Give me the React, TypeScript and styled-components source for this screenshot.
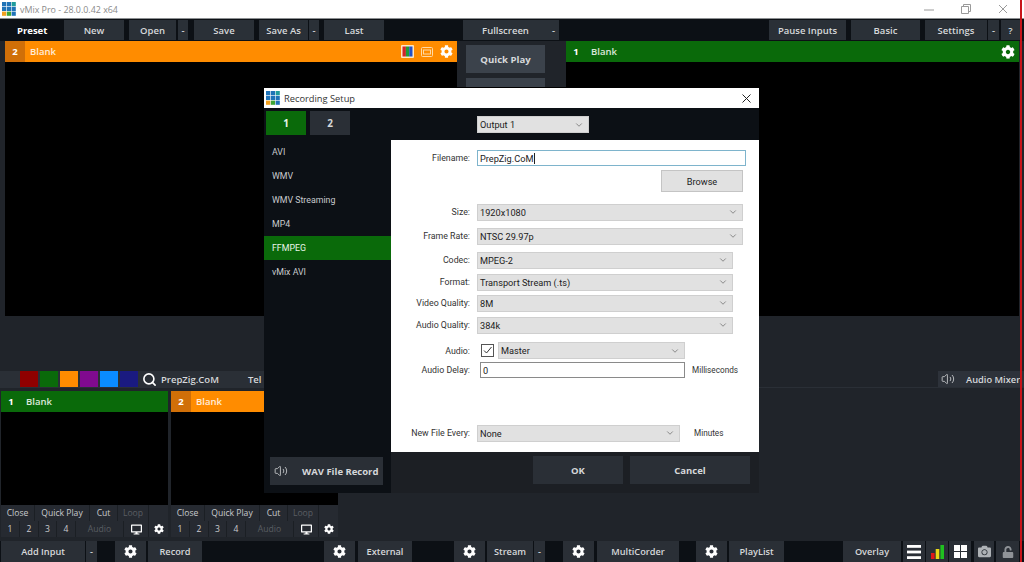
import React from "react";
import styled, { createGlobalStyle } from "styled-components";
import { FaCog, FaDesktop, FaCamera, FaUnlock } from "react-icons/fa";
import { ChevronDown, Volume2, Search } from "lucide-react";

const Global = createGlobalStyle`
  html, body { margin: 0; padding: 0; background: #20242a; }
  * { box-sizing: border-box; }
  body { font-family: "Open Sans", "Liberation Sans", sans-serif; }
`;

const Page = styled.div`
  position: relative; width: 1024px; height: 562px; overflow: hidden;
  background: #20242a; display: flex; flex-direction: column;
`;
const RedEdge = styled.div`
  position: absolute; top: 0; bottom: 0; left: 1020px; width: 2px; background: #c8141a; z-index: 5;
`;
const TitleBar = styled.div`
  height: 19px; flex: none; background: #fff; border-bottom: 1px solid #8c8f92;
  display: flex; align-items: center; padding-left: 2px; gap: 4px;
`;
const TitleText = styled.span`font-size: 8.9px; color: #8a8a8a;`;
const WinControls = styled.div`margin-left: auto; margin-right: 16px; display: flex; gap: 27px; align-items: center; padding-bottom: 1px;`;
const Toolbar = styled.div`
  height: 22px; flex: none; background: #0c1015; display: flex; align-items: stretch; padding: 1px 0;
`;
const PresetLabel = styled.div`
  width: 64px; font-size: 9.5px; font-weight: 700; color: #fff; display: flex; align-items: center; padding-left: 17px;
`;
const Btn = styled.div<{ $w: number; $ml?: number; $dim?: boolean }>`
  width: ${p => p.$w}px; margin-left: ${p => p.$ml ?? 0}px; flex: none; background: #2a3037;
  color: ${p => (p.$dim ? "#56595e" : "#d6d8da")}; font-size: 9.5px; font-weight: 600;
  display: flex; align-items: center; justify-content: center; white-space: nowrap;
`;
const Main = styled.div`display: flex; height: 275px; flex: none;`;
const Monitor = styled.div<{ $ml: number; $w: number }>`
  margin-left: ${p => p.$ml}px; width: ${p => p.$w}px; display: flex; flex-direction: column; background: #000;
`;
const Header = styled.div<{ $c: string }>`
  height: 21px; flex: none; background: ${p => p.$c}; display: flex; align-items: center;
  color: #fff; font-size: 9.5px; padding-right: 4px;
`;
const HeaderNum = styled.div<{ $c: string }>`
  width: 20px; align-self: stretch; background: ${p => p.$c}; display: flex; align-items: center; justify-content: center; font-weight: 700;
`;
const HeaderName = styled.span`margin-left: 5px; font-weight: 600; opacity: .85;`;
const HeaderIcons = styled.div`margin-left: auto; display: flex; align-items: center; gap: 7px;`;
const Screen = styled.div`flex: 1; background: #000;`;
const CenterCol = styled.div`width: 109px; flex: none; padding: 4px 21px 0 9px; display: flex; flex-direction: column; gap: 5px;`;
const BigBtn = styled(Btn)`height: 28px; width: auto; background: #3b424b; font-size: 9.6px; font-weight: 700;`;
const SwatchBar = styled.div`
  height: 17px; margin-top: 55px; flex: none; display: flex; align-items: stretch; border-bottom: 1px solid #2a2f36;
`;
const SwatchGroup = styled.div`width: 264px; flex: none; display: flex; align-items: center; background: #2a2f36;`;
const Swatch = styled.div<{ $c: string }>`width: 18px; height: 16px; margin-right: 2px; background: ${p => p.$c};`;
const SearchIcon = styled(Search)`margin-left: 2px; flex: none;`;
const SearchName = styled.span`font-size: 9.5px; font-weight: 600; color: #d6d8da; margin-left: 4px;`;
const Tel = styled.span`font-size: 9.5px; font-weight: 600; color: #d6d8da; margin-left: 29px;`;
const MixerLabel = styled.div`
  margin-left: auto; width: 86px; background: #2d323a; display: flex; align-items: center; padding-left: 3px; gap: 11px;
  font-size: 9.3px; font-weight: 600; color: #d6d8da; white-space: nowrap;
`;
const Inputs = styled.div`flex: none; height: 149px; padding: 3px 0 0 1px; margin-bottom: 4px; display: flex; gap: 3px;`;
const Card = styled.div`width: 167px; display: flex; flex-direction: column;`;
const CardCtlRow = styled.div`height: 16px; flex: none; display: flex; background: #1b1f24; gap: 1px;`;
const Ctl = styled.div<{ $w: number; $dim?: boolean }>`
  width: ${p => p.$w}px; flex: none; background: #262a31; font-size: 8.6px;
  color: ${p => (p.$dim ? "#5a5e63" : "#c9cbce")}; display: flex; align-items: center; justify-content: center;
`;
const BottomBar = styled.div`
  height: 21px; flex: none; background: #0c1015; display: flex; align-items: stretch;
`;
const BarBtn = styled(Btn)`background: #2a2f36; font-size: 9.2px;`;
const Dialog = styled.div`
  position: absolute; left: 264px; top: 88px; width: 495px; height: 405px; background: #1c1f24;
  display: flex; flex-direction: column; z-index: 3; box-shadow: 0 -1px 0 #000;
  font-family: Roboto, "Open Sans", sans-serif;
`;
const DlgTitle = styled.div`
  height: 20px; flex: none; background: #fff; display: flex; align-items: center; padding: 0 8px 0 2px; gap: 4px;
  font-family: "Open Sans", sans-serif; font-size: 9.3px; color: #333;
`;
const DlgClose = styled.div`margin-left: auto; display: flex;`;
const DlgTop = styled.div`height: 32px; flex: none; background: #0c1015; display: flex; padding: 3px 0 0 2px;`;
const Tab = styled.div<{ $on?: boolean }>`
  width: 40px; height: 24px; margin-right: 4px; background: ${p => (p.$on ? "#0a6a0a" : "#2a2f36")};
  color: ${p => (p.$on ? "#e8f5e8" : "#d6d8da")}; font-family: "Open Sans", sans-serif; font-size: 10px; font-weight: 700; display: flex; align-items: center; justify-content: center;
`;
const OutputWrap = styled.div`margin: 5px 0 0 123px;`;
const Select = styled.div<{ $w: number }>`
  width: ${p => p.$w}px; height: 17px; background: #e1e1e1; border: 1px solid #cfcfcf; color: #222;
  font-size: 9.2px; display: flex; align-items: center; justify-content: space-between; padding: 0 4px 0 2px;
  flex: none; white-space: nowrap;
`;
const DlgBody = styled.div`flex: 1; display: flex; min-height: 0;`;
const Side = styled.div`width: 127px; flex: none; background: #0c1015; display: flex; flex-direction: column;`;
const SideItem = styled.div<{ $on?: boolean }>`
  height: 24px; flex: none; padding-left: 8px; display: flex; align-items: center; font-size: 8.8px;
  color: ${p => (p.$on ? "#e8f5e8" : "#c9cbce")}; background: ${p => (p.$on ? "#0a6a0a" : "transparent")};
`;
const WavBtn = styled.div`
  margin: auto 8px 8px 6px; height: 28px; background: #2a2f36; color: #d6d8da; font-family: "Open Sans", sans-serif; font-size: 9.5px; font-weight: 700;
  display: flex; align-items: center; padding-left: 4px; gap: 14px; white-space: nowrap;
`;
const Right = styled.div`flex: 1; display: flex; flex-direction: column;`;
const Form = styled.div`height: 312px; flex: none; background: #fff; padding-top: 10px; display: flex; flex-direction: column;`;
const Row = styled.div<{ $mt?: number; $h?: number }>`
  display: flex; align-items: center; margin-top: ${p => p.$mt ?? 0}px; height: ${p => p.$h ?? 16}px; flex: none;
`;
const Label = styled.div`width: 79px; margin-right: 7px; flex: none; text-align: right; font-size: 8.8px; color: #333; white-space: nowrap;`;
const Filename = styled.div`
  width: 269px; height: 16px; border: 1px solid #7eb4cc; font-size: 9.2px; color: #222; display: flex; align-items: center; padding-left: 2px;
`;
const Caret = styled.span`width: 1px; height: 11px; background: #222; margin-left: 1px;`;
const BrowseBtn = styled.div`
  width: 82px; height: 22px; margin: 4px 0 0 270px; background: #e1e1e1; border: 1px solid #c4c4c4; font-size: 9.2px; color: #222;
  display: flex; align-items: center; justify-content: center;
`;
const Check = styled.div`
  width: 13px; height: 13px; border: 1px solid #555; margin: 0 4px; flex: none; display: flex; align-items: center; justify-content: center;
`;
const DelayInput = styled.div`
  width: 205px; height: 16px; margin-left: 3px; border: 1px solid #8a8a8a; font-size: 9.2px; color: #222; display: flex; align-items: center; padding-left: 2px; flex: none;
`;
const Unit = styled.span<{ $ml: number }>`font-size: 8.2px; color: #333; margin-left: ${p => p.$ml}px;`;
const DlgButtons = styled.div`flex: 1; display: flex; padding: 4px 0 0 142px; gap: 7px; background: #1c1f24;`;
const DlgBtn = styled.div<{ $w: number }>`
  width: ${p => p.$w}px; height: 28px; background: #2a2f36; color: #d6d8da; font-family: "Open Sans", sans-serif; font-size: 9.5px; font-weight: 700;
  display: flex; align-items: center; justify-content: center;
`;

const Logo = () => (
  <svg width="14" height="14" viewBox="0 0 14 14">
    {[
      ["#1f73b7", "#1f73b7", "#1f9c9c"],
      ["#1f73b7", "#1f73b7", "#1f73b7"],
      ["#f2a01e", "#3fa535", "#1f73b7"],
    ].map((row, r) => row.map((c, i) => <rect key={`${r}${i}`} x={i * 4.8} y={r * 4.8} width="4.2" height="4.2" fill={c} />))}
  </svg>
);

const Sel = ({ w, v }: { w: number; v: string }) => (
  <Select $w={w}>
    <span>{v}</span>
    <ChevronDown size={10} strokeWidth={1.5} color="#555" />
  </Select>
);

const Gear = ({ s = 13 }: { s?: number }) => <FaCog size={s} color="#fff" />;

const GearBtn = ({ ml }: { ml: number }) => (
  <BarBtn $w={31} $ml={ml}><Gear /></BarBtn>
);

const InputCard = ({ n, color, numColor }: { n: string; color: string; numColor: string }) => (
  <Card>
    <Header $c={color}><HeaderNum $c={numColor}>{n}</HeaderNum><HeaderName>Blank</HeaderName></Header>
    <Screen />
    <CardCtlRow>
      <Ctl $w={33}>Close</Ctl><Ctl $w={54}>Quick Play</Ctl><Ctl $w={27}>Cut</Ctl><Ctl $w={30} $dim>Loop</Ctl><Ctl $w={19} />
    </CardCtlRow>
    <CardCtlRow>
      <Ctl $w={18}>1</Ctl><Ctl $w={18}>2</Ctl><Ctl $w={17}>3</Ctl><Ctl $w={18}>4</Ctl><Ctl $w={47} $dim>Audio</Ctl>
      <Ctl $w={24}><FaDesktop size={11} color="#fff" /></Ctl><Ctl $w={19}><Gear s={10} /></Ctl>
    </CardCtlRow>
  </Card>
);

export default function App() {
  return (
    <Page>
      <Global />
      <RedEdge />
      <TitleBar>
        <Logo />
        <TitleText>vMix Pro - 28.0.0.42 x64</TitleText>
        <WinControls>
          <svg width="10" height="10" viewBox="0 0 10 10"><path d="M0 6h10" stroke="#9a9a9a" /></svg>
          <svg width="10" height="10" viewBox="0 0 10 10" fill="none" stroke="#9a9a9a"><path d="M.5 2.5h7v7h-7zM2.5 2.5v-2h7v7h-2" /></svg>
          <svg width="10" height="10" viewBox="0 0 10 10" stroke="#9a9a9a"><path d="M1 1l8 8M9 1l-8 8" /></svg>
        </WinControls>
      </TitleBar>
      <Toolbar>
        <PresetLabel>Preset</PresetLabel>
        <Btn $w={60}>New</Btn>
        <Btn $w={47} $ml={5}>Open</Btn>
        <Btn $w={10} $ml={2}>-</Btn>
        <Btn $w={60} $ml={6}>Save</Btn>
        <Btn $w={49} $ml={5}>Save As</Btn>
        <Btn $w={10} $ml={1}>-</Btn>
        <Btn $w={60} $ml={5}>Last</Btn>
        <Btn $w={85} $ml={79}>Fullscreen</Btn>
        <Btn $w={11}>-</Btn>
        <Btn $w={77} $ml={210}>Pause Inputs</Btn>
        <Btn $w={69} $ml={5}>Basic</Btn>
        <Btn $w={62} $ml={5}>Settings</Btn>
        <Btn $w={11} $ml={1}>-</Btn>
        <Btn $w={19} $ml={2}>?</Btn>
      </Toolbar>
      <Main>
        <Monitor $ml={5} $w={452}>
          <Header $c="#ff8c00">
            <HeaderNum $c="#d06f08">2</HeaderNum>
            <HeaderName>Blank</HeaderName>
            <HeaderIcons>
              <svg width="13" height="13" viewBox="0 0 13 13"><rect width="13" height="13" rx="1" fill="#ffe6c4" /><rect x="1.5" y="1.5" width="3.4" height="10" fill="#d2232a" /><rect x="4.9" y="1.5" width="3.3" height="10" fill="#1f9c3a" /><rect x="8.2" y="1.5" width="3.3" height="10" fill="#2450c8" /></svg>
              <svg width="12" height="10" viewBox="0 0 12 10" fill="none" stroke="#ffd9a6"><rect x=".5" y=".5" width="11" height="9" rx="1" /><rect x="2.5" y="3" width="7" height="4" /></svg>
              <Gear s={13} />
            </HeaderIcons>
          </Header>
          <Screen />
        </Monitor>
        <CenterCol>
          <BigBtn $w={79}>Quick Play</BigBtn>
          <BigBtn $w={79} />
        </CenterCol>
        <Monitor $ml={0} $w={453}>
          <Header $c="#0a6a0a">
            <HeaderNum $c="#0a6a0a">1</HeaderNum>
            <HeaderName>Blank</HeaderName>
            <HeaderIcons><Gear s={14} /></HeaderIcons>
          </Header>
          <Screen />
        </Monitor>
      </Main>
      <SwatchBar>
        <SwatchGroup>
          <Swatch $c="transparent" />
          <Swatch $c="#8f0000" />
          <Swatch $c="#0a6a0a" />
          <Swatch $c="#ff8c00" />
          <Swatch $c="#800a8f" />
          <Swatch $c="#0a8cff" />
          <Swatch $c="#1a1a80" />
          <SearchIcon size={15} strokeWidth={2.6} color="#fff" />
          <SearchName>PrepZig.CoM</SearchName>
          <Tel>Tel</Tel>
        </SwatchGroup>
        <MixerLabel>
          <Volume2 size={14} strokeWidth={1.5} color="#c9cbce" />
          Audio Mixer
        </MixerLabel>
      </SwatchBar>
      <Inputs>
        <InputCard n="1" color="#0a6a0a" numColor="#0a6a0a" />
        <InputCard n="2" color="#ff8c00" numColor="#d06f08" />
      </Inputs>
      <BottomBar>
        <BarBtn $w={84} $ml={1}>Add Input</BarBtn>
        <BarBtn $w={11} $ml={1}>-</BarBtn>
        <GearBtn ml={18} />
        <BarBtn $w={54} $ml={2}>Record</BarBtn>
        <GearBtn ml={122} />
        <BarBtn $w={54} $ml={3}>External</BarBtn>
        <GearBtn ml={42} />
        <BarBtn $w={46} $ml={2}>Stream</BarBtn>
        <BarBtn $w={11} $ml={1}>-</BarBtn>
        <GearBtn ml={18} />
        <BarBtn $w={82} $ml={3}>MultiCorder</BarBtn>
        <GearBtn ml={17} />
        <BarBtn $w={55} $ml={2}>PlayList</BarBtn>
        <BarBtn $w={58} $ml={59}>Overlay</BarBtn>
        <BarBtn $w={22} $ml={2}>
          <svg width="14" height="14" viewBox="0 0 14 14" fill="#fff"><rect width="14" height="2.8" /><rect y="5.6" width="14" height="2.8" /><rect y="11.2" width="14" height="2.8" /></svg>
        </BarBtn>
        <BarBtn $w={22} $ml={1}>
          <svg width="13" height="14" viewBox="0 0 13 14"><rect y="8" width="3.6" height="6" fill="#e01818" /><rect x="4.7" y="4" width="3.6" height="10" fill="#e8d818" /><rect x="9.4" width="3.6" height="14" fill="#20c020" /></svg>
        </BarBtn>
        <BarBtn $w={22} $ml={1}>
          <svg width="13" height="13" viewBox="0 0 13 13" fill="#fff"><rect width="6" height="6" /><rect x="7" width="6" height="6" /><rect y="7" width="6" height="6" /><rect x="7" y="7" width="6" height="6" /></svg>
        </BarBtn>
        <BarBtn $w={20} $ml={3}><FaCamera size={13} color="#aeb2b6" /></BarBtn>
        <BarBtn $w={23} $ml={2}><FaUnlock size={12} color="#8f9398" /></BarBtn>
      </BottomBar>

      <Dialog>
        <DlgTitle>
          <Logo />
          <span>Recording Setup</span>
          <DlgClose>
            <svg width="9" height="9" viewBox="0 0 9 9" stroke="#222"><path d="M.5.5l8 8M8.5.5l-8 8" /></svg>
          </DlgClose>
        </DlgTitle>
        <DlgTop>
          <Tab $on>1</Tab>
          <Tab>2</Tab>
          <OutputWrap><Sel w={112} v="Output 1" /></OutputWrap>
        </DlgTop>
        <DlgBody>
          <Side>
            <SideItem>AVI</SideItem>
            <SideItem>WMV</SideItem>
            <SideItem>WMV Streaming</SideItem>
            <SideItem>MP4</SideItem>
            <SideItem $on>FFMPEG</SideItem>
            <SideItem>vMix AVI</SideItem>
            <WavBtn>
              <Volume2 size={14} strokeWidth={1.5} color="#c9cbce" />
              WAV File Record
            </WavBtn>
          </Side>
          <Right>
            <Form>
              <Row>
                <Label>Filename:</Label>
                <Filename>PrepZig.CoM<Caret /></Filename>
              </Row>
              <BrowseBtn>Browse</BrowseBtn>
              <Row $mt={12}><Label>Size:</Label><Sel w={266} v="1920x1080" /></Row>
              <Row $mt={8}><Label>Frame Rate:</Label><Sel w={266} v="NTSC 29.97p" /></Row>
              <Row $mt={8}><Label>Codec:</Label><Sel w={256} v="MPEG-2" /></Row>
              <Row $mt={6}><Label>Format:</Label><Sel w={256} v="Transport Stream (.ts)" /></Row>
              <Row $mt={5}><Label>Video Quality:</Label><Sel w={256} v="8M" /></Row>
              <Row $mt={6}><Label>Audio Quality:</Label><Sel w={256} v="384k" /></Row>
              <Row $mt={9} $h={17}>
                <Label>Audio:</Label>
                <Check>
                  <svg width="11" height="11" viewBox="0 0 11 11" fill="none" stroke="#333"><path d="M2 5.5l2.5 2.5L9.5 2" /></svg>
                </Check>
                <Sel w={187} v="Master" />
              </Row>
              <Row $mt={3}>
                <Label>Audio Delay:</Label>
                <DelayInput>0</DelayInput>
                <Unit $ml={7}>Milliseconds</Unit>
              </Row>
              <Row $mt={47}>
                <Label>New File Every:</Label>
                <Sel w={203} v="None" />
                <Unit $ml={14}>Minutes</Unit>
              </Row>
            </Form>
            <DlgButtons>
              <DlgBtn $w={90}>OK</DlgBtn>
              <DlgBtn $w={120}>Cancel</DlgBtn>
            </DlgButtons>
          </Right>
        </DlgBody>
      </Dialog>
    </Page>
  );
}
